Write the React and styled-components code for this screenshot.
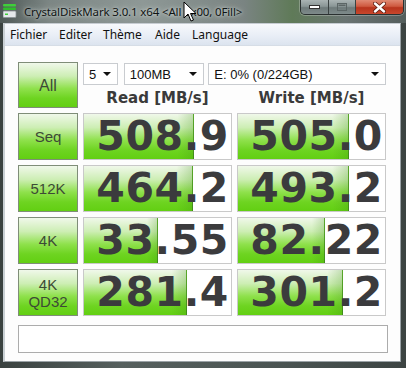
import { Fragment } from 'react';
import styled, { createGlobalStyle } from 'styled-components';

const GlobalStyle = createGlobalStyle`
  html, body {
    margin: 0;
    padding: 0;
    background: #3e4644;
  }
`;

const rows = [
  { label: ['Seq'], read: '508.9', readFill: 110, write: '505.0', writeFill: 111 },
  { label: ['512K'], read: '464.2', readFill: 109, write: '493.2', writeFill: 111 },
  { label: ['4K'], read: '33.55', readFill: 74, write: '82.22', writeFill: 87 },
  { label: ['4K', 'QD32'], read: '281.4', readFill: 103, write: '301.2', writeFill: 105 },
];

const GREEN = 'linear-gradient(180deg, #f0f8ea 0%, #cdeeb4 30%, #8fe14c 58%, #6ed421 80%, #62cf12 100%)';

const Window = styled.div`
  width: 406px;
  height: 368px;
  display: flex;
  flex-direction: column;
  overflow: hidden;
  background: linear-gradient(90deg, #3a4240 0%, #56605e 30%, #4a5452 70%, #3c4442 100%);
`;

const TitleBar = styled.div`
  position: relative;
  height: 23px;
  flex: none;
  display: flex;
  align-items: flex-start;
  background: linear-gradient(90deg, #4e5856 0%, #7c8684 12%, #8e9896 35%, #7a8482 60%, #5f7a58 72%, #6a7472 85%, #545e5c 100%);
`;

const AppIcon = styled.svg`
  margin: 4px 0 0 3px;
  flex: none;
`;

const Title = styled.div`
  margin: 4px 0 0 7px;
  font-family: 'Noto Sans', sans-serif;
  font-size: 11.5px;
  letter-spacing: -0.15px;
  line-height: 15px;
  color: #101414;
  white-space: nowrap;
  text-shadow: 0 0 6px rgba(220, 228, 226, 0.9), 0 0 3px rgba(220, 228, 226, 0.8);
`;

const Cursor = styled.svg`
  position: absolute;
  left: 183px;
  top: 1px;
`;

const Controls = styled.div`
  margin-left: auto;
  margin-right: 2px;
  display: flex;
  height: 14px;
  border: 1px solid #2a3030;
  border-top: none;
  border-radius: 0 0 5px 5px;
  overflow: hidden;
  box-shadow: 0 0 0 1px rgba(255, 255, 255, 0.25);
`;

const CtrlButton = styled.div`
  width: ${(p) => p.$w}px;
  height: 14px;
  display: flex;
  align-items: center;
  justify-content: center;
  border-left: ${(p) => (p.$first ? 'none' : '1px solid #3a4242')};
  background: ${(p) =>
    p.$close
      ? 'linear-gradient(180deg, #e08a74 0%, #cf5a40 45%, #b7341d 55%, #c9472c 100%)'
      : 'linear-gradient(180deg, #aab4b4 0%, #8a9696 45%, #6e7a7a 55%, #7e8a8a 100%)'};
`;

const Frame = styled.div`
  flex: 1;
  display: flex;
  flex-direction: column;
  padding: 0 5px 6px 3px;
`;

const Inner = styled.div`
  flex: 1;
  display: flex;
  flex-direction: column;
  border-left: 2px solid #c9d0d4;
  border-top: 1px solid #c6ccd2;
  border-right: 1px solid #9aa2a6;
  border-bottom: 1px solid #9aa2a6;
`;

const MenuBar = styled.div`
  height: 21px;
  flex: none;
  display: flex;
  align-items: center;
  padding-left: 2px;
  background: linear-gradient(180deg, #f7f9fc 0%, #e9eef6 55%, #dce4ef 100%);
  border-bottom: 1px solid #d6dde6;
`;

const MenuItem = styled.span`
  box-sizing: border-box;
  font-family: 'Noto Sans', sans-serif;
  font-size: 12px;
  color: #111;
  padding: 0 0 0 3px;
  width: ${(p) => (p.$w ? `${p.$w}px` : 'auto')};
`;

const Client = styled.div`
  flex: 1;
  background: #fdfdfd;
  padding: 16px 0 0 13px;
`;

const Grid = styled.div`
  display: grid;
  grid-template-columns: 60px 149px 149px;
  grid-template-rows: 46px repeat(4, 47px);
  column-gap: 5px;
  row-gap: 5px;
`;

const LabelButton = styled.div`
  box-sizing: border-box;
  display: flex;
  flex-direction: column;
  align-items: center;
  justify-content: center;
  border: 1px solid #7f8d78;
  background: ${GREEN};
  font-family: 'Liberation Sans', Arial, sans-serif;
  font-size: ${(p) => (p.$big ? 16 : 15)}px;
  line-height: ${(p) => (p.$big ? 18 : 17)}px;
  color: #3d4a36;
  padding-top: ${(p) => (p.$big ? 2 : 0)}px;
`;

const TopArea = styled.div`
  grid-column: 2 / 4;
  display: flex;
  flex-direction: column;
`;

const SelectRow = styled.div`
  display: flex;
  margin-top: 1px;
`;

const Select = styled.div`
  box-sizing: border-box;
  width: ${(p) => p.$w}px;
  height: 22px;
  margin-right: ${(p) => p.$gap || 0}px;
  display: flex;
  align-items: center;
  justify-content: space-between;
  padding: 0 6px 0 5px;
  border: 1px solid #c9ccd0;
  background: #fff;
  font-family: 'Liberation Sans', Arial, sans-serif;
  font-size: 13px;
  color: #111;
`;

const Arrow = styled.span`
  width: 0;
  height: 0;
  border-left: 4px solid transparent;
  border-right: 4px solid transparent;
  border-top: 4px solid #111;
`;

const HeaderRow = styled.div`
  display: grid;
  grid-template-columns: 149px 149px;
  column-gap: 5px;
  margin-top: 4px;
`;

const Header = styled.div`
  text-align: center;
  font-family: 'DejaVu Sans', Verdana, sans-serif;
  font-weight: bold;
  font-size: 15px;
  line-height: 18px;
  color: #3a3a3a;
`;

const ResultCell = styled.div`
  box-sizing: border-box;
  border: 1px solid #c9c9c9;
  background-color: #fff;
  background-repeat: no-repeat;
  display: flex;
  align-items: center;
  justify-content: flex-end;
  padding-right: 2px;
  font-family: 'DejaVu Sans', Verdana, sans-serif;
  font-weight: bold;
  font-size: 41px;
  letter-spacing: 0.6px;
  color: #3b3b3d;
  line-height: 1;
`;

const Comment = styled.div`
  box-sizing: border-box;
  width: 370px;
  height: 28px;
  margin-top: 9px;
  border: 1px solid #acacac;
  background: #fff;
`;

const barStyle = (fill) => ({
  backgroundImage: `linear-gradient(#5aa82a, #3f8a1a), linear-gradient(90deg, rgba(0,0,0,0) 85%, rgba(60,140,20,0.25) 100%), ${GREEN}`,
  backgroundSize: `1px 100%, ${fill}px 100%, ${fill}px 100%`,
  backgroundPosition: `${fill - 1}px 0, 0 0, 0 0`,
});

const DriveIcon = () => (
  <AppIcon width="14" height="14" viewBox="0 0 14 14">
    <rect x="0" y="0" width="13" height="2.5" rx="1" fill="#3fcf3a" />
    <rect x="0" y="3.5" width="13" height="2.5" rx="1" fill="#2fbf2c" />
    <rect x="0" y="7" width="13" height="6.5" rx="1" fill="#e4e8ea" stroke="#8a9294" strokeWidth="0.8" />
    <rect x="2" y="9.5" width="3" height="1.5" fill="#3fcf3a" />
  </AppIcon>
);

const Pointer = () => (
  <Cursor width="14" height="22" viewBox="0 0 14 22">
    <path d="M1 1 L1 17 L5 13 L8 20 L10.5 19 L7.5 12.5 L13 12.5 Z" fill="#fff" stroke="#000" strokeWidth="1" strokeLinejoin="round" />
  </Cursor>
);

export default function App() {
  return (
    <>
      <GlobalStyle />
      <Window>
        <TitleBar>
          <DriveIcon />
          <Title>CrystalDiskMark 3.0.1 x64 &lt;All 0x00, 0Fill&gt;</Title>
          <Pointer />
          <Controls>
            <CtrlButton $w={27} $first>
              <svg width="11" height="4" viewBox="0 0 11 4">
                <rect x="0.5" y="0.5" width="10" height="3" fill="#fff" stroke="#333" />
              </svg>
            </CtrlButton>
            <CtrlButton $w={26}>
              <svg width="10" height="8" viewBox="0 0 10 8">
                <rect x="0.5" y="0.5" width="9" height="7" fill="none" stroke="#5c6666" strokeWidth="1" />
                <rect x="1.5" y="1.5" width="7" height="1.5" fill="#5c6666" />
              </svg>
            </CtrlButton>
            <CtrlButton $w={47} $close>
              <svg width="13" height="11" viewBox="0 0 13 11">
                <path d="M2 1.5 L11 9.5 M11 1.5 L2 9.5" stroke="#5a1a10" strokeWidth="4" strokeLinecap="round" />
                <path d="M2 1.5 L11 9.5 M11 1.5 L2 9.5" stroke="#fff" strokeWidth="2.4" strokeLinecap="round" />
              </svg>
            </CtrlButton>
          </Controls>
        </TitleBar>
        <Frame>
          <Inner>
            <MenuBar>
              <MenuItem $w={49}>Fichier</MenuItem>
              <MenuItem $w={44}>Editer</MenuItem>
              <MenuItem $w={52}>Thème</MenuItem>
              <MenuItem $w={37}>Aide</MenuItem>
              <MenuItem>Language</MenuItem>
            </MenuBar>
            <Client>
              <Grid>
                <LabelButton $big>All</LabelButton>
                <TopArea>
                  <SelectRow>
                    <Select $w={35} $gap={6}>
                      5<Arrow />
                    </Select>
                    <Select $w={81} $gap={4}>
                      100MB<Arrow />
                    </Select>
                    <Select $w={179}>
                      E: 0% (0/224GB)<Arrow />
                    </Select>
                  </SelectRow>
                  <HeaderRow>
                    <Header>Read [MB/s]</Header>
                    <Header>Write [MB/s]</Header>
                  </HeaderRow>
                </TopArea>
                {rows.map((r) => (
                  <Fragment key={r.label.join('')}>
                    <LabelButton>
                      {r.label.map((t) => (
                        <span key={t}>{t}</span>
                      ))}
                    </LabelButton>
                    <ResultCell style={barStyle(r.readFill)}>{r.read}</ResultCell>
                    <ResultCell style={barStyle(r.writeFill)}>{r.write}</ResultCell>
                  </Fragment>
                ))}
              </Grid>
              <Comment />
            </Client>
          </Inner>
        </Frame>
      </Window>
    </>
  );
}
